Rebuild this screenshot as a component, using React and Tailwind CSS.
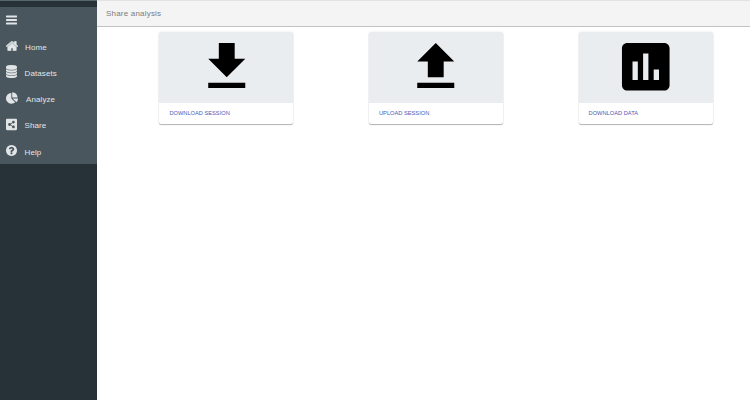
import React from "react";
import { FaShareAltSquare } from "react-icons/fa";

const HOME =
  "M1472 992v480q0 26-19 45t-45 19h-384v-384h-256v384h-384q-26 0-45-19t-19-45v-480q0-1 .5-3t.5-3l575-474 575 474q1 2 1 6zm223-69l-62 74q-8 9-21 11h-3q-13 0-21-7l-692-577-692 577q-12 8-24 7-13-2-21-11l-62-74q-8-10-7-23.5t11-21.5l719-599q32-26 76-26t76 26l244 204v-195q0-14 9-23t23-9h192q14 0 23 9t9 23v408l219 182q10 8 11 21.5t-7 23.5z";
const DATABASE =
  "M896 768q237 0 443-43t325-127v170q0 69-103 128t-280 93.5-385 34.5-385-34.5-280-93.5-103-128v-170q119 84 325 127t443 43zm0 768q237 0 443-43t325-127v170q0 69-103 128t-280 93.5-385 34.5-385-34.5-280-93.5-103-128v-170q119 84 325 127t443 43zm0-384q237 0 443-43t325-127v170q0 69-103 128t-280 93.5-385 34.5-385-34.5-280-93.5-103-128v-170q119 84 325 127t443 43zm0-1152q208 0 385 34.5t280 93.5 103 128v128q0 69-103 128t-280 93.5-385 34.5-385-34.5-280-93.5-103-128v-128q0-69 103-128t280-93.5 385-34.5z";
const PIE =
  "M768 890l546 546q-106 108-247.5 168t-298.5 60q-209 0-385.5-103t-279.5-279.5-103-385.5 103-385.5 279.5-279.5 385.5-103v762zm187 6h773q0 157-60 298.5t-168 247.5zm709-128h-768v-768q209 0 385.5 103t279.5 279.5 103 385.5z";
const HELP =
  "M1024 1376v-192q0-14-9-23t-23-9h-192q-14 0-23 9t-9 23v192q0 14 9 23t23 9h192q14 0 23-9t9-23zm256-672q0-88-55.5-163t-138.5-116-170-41q-243 0-371 213-15 24 8 42l132 100q7 6 19 6 16 0 25-12 53-68 86-92 34-24 86-24 48 0 85.5 26t37.5 59q0 38-20 61t-68 45q-63 28-115.5 86.5t-52.5 125.5v36q0 14 9 23t23 9h192q14 0 23-9t9-23q0-19 21.5-49.5t54.5-49.5q32-18 49-28.5t46-35 44.5-48 28-60.5 12.5-81zm384 192q0 209-103 385.5t-279.5 279.5-385.5 103-385.5-103-279.5-279.5-103-385.5 103-385.5 279.5-279.5 385.5-103 385.5 103 279.5 279.5 103 385.5z";

function Glyph({ d, box, className }) {
  return (
    <svg viewBox={box} className={className} fill="currentColor">
      <path d={d} />
    </svg>
  );
}

const items = [
  { label: "Home", gap: "pl-[25px]", icon: <Glyph d={HOME} box="89 253 1614 1283" className="h-[10px] w-[12px] stroke-current stroke-[70]" /> },
  { label: "Datasets", gap: "pl-[24.5px]", icon: <Glyph d={DATABASE} box="128 0 1536 1792" className="h-[13px] w-[11px] stroke-current stroke-[40]" /> },
  { label: "Analyze", gap: "pl-[26px]", icon: <Glyph d={PIE} box="0 0 1728 1664" className="h-3 w-3" /> },
  { label: "Share", gap: "pl-[24.5px]", icon: <FaShareAltSquare className="h-[13px] w-[11px]" preserveAspectRatio="none" /> },
  { label: "Help", gap: "pl-[24.5px]", icon: <Glyph d={HELP} box="128 128 1536 1536" className="h-[11px] w-[11px]" /> },
];

const cards = [
  { label: "DOWNLOAD SESSION", d: "M19 9h-4V3H9v6H5l7 7 7-7zM5 18v2h14v-2H5z" },
  { label: "UPLOAD SESSION", d: "M9 16h6v-6h4l-7-7-7 7h4zm-4 2h14v2H5z" },
  {
    label: "DOWNLOAD DATA",
    d: "M19 3H5c-1.1 0-2 .9-2 2v14c0 1.1.9 2 2 2h14c1.1 0 2-.9 2-2V5c0-1.1-.9-2-2-2zM9 17H7v-7h2v7zm4 0h-2V7h2v10zm4 0h-2v-4h2v4z",
  },
];

function Sidebar() {
  return (
    <aside className="flex w-[97px] shrink-0 flex-col border-t border-[#56666d] bg-[#263238] pt-[6px] text-[#e2e5e7]">
      <nav className="h-[157px] bg-[#49565d]">
        <div className="flex h-[27.5px] items-center pl-[6px]">
          <svg viewBox="0 0 11 10" className="mt-[-2px] h-[10px] w-[11px]" fill="currentColor">
            <rect y="0.5" width="11" height="1.9" rx="0.4" />
            <rect y="4" width="11" height="1.9" rx="0.4" />
            <rect y="7.5" width="11" height="1.9" rx="0.4" />
          </svg>
        </div>
        {items.map((item) => (
          <div key={item.label} className="relative flex h-[26.25px] items-center">
            <span className="absolute top-[5px] left-[6px] flex h-3 items-center">{item.icon}</span>
            <span className={`${item.gap} text-[8px]/[26px] tracking-[0.1px]`}>{item.label}</span>
          </div>
        ))}
      </nav>
    </aside>
  );
}

function Card({ label, d }) {
  return (
    <article className="w-[134px] overflow-hidden rounded-[2px] bg-white shadow-[0_1px_1px_rgba(0,0,0,0.28),0_0_2px_rgba(0,0,0,0.12)]">
      <div className="flex h-[71.5px] items-center justify-center bg-[#e9edf0]">
        <Glyph d={d} box="0 0 24 24" className="-mt-px size-[63.5px] text-black" />
      </div>
      <div className="flex h-[21px] items-center pl-[10px] text-[5.7px] text-[#4b5bb8]">{label}</div>
    </article>
  );
}

export default function App() {
  return (
    <div className="flex h-[400px] w-[750px] overflow-hidden bg-white font-['Liberation_Sans',Arial,sans-serif]">
      <Sidebar />
      <main className="min-w-0 flex-1">
        <header className="flex h-[27px] items-center border-t border-b border-t-[#e2e2e2] border-b-[#c2c2c2] bg-[#f4f4f4] pt-px pl-[9px] text-[8px] tracking-[0.2px] text-[#7c7c7c]">
          Share analysis
        </header>
        <section className="flex gap-[75.6px] pt-[4.5px] pl-[62.4px]">
          {cards.map((card) => (
            <Card key={card.label} {...card} />
          ))}
        </section>
      </main>
    </div>
  );
}
